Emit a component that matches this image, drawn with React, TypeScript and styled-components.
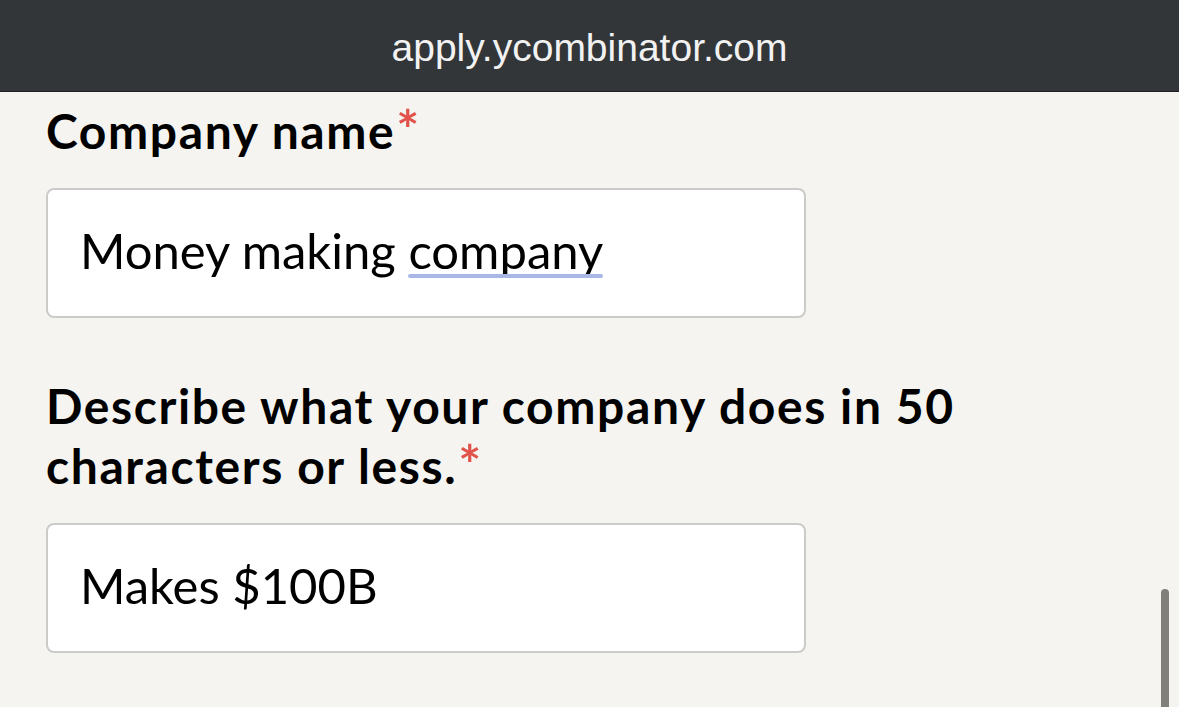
import styled, { createGlobalStyle } from "styled-components";

const GlobalStyle = createGlobalStyle`
    html, body {
        margin: 0;
        padding: 0;
        height: 707px;
        overflow: hidden;
        background: #f5f4f0;
    }
`;

const fields = [
    { label: "Company name", value: "Money making", flagged: "company" },
    { label: "Describe what your company does in 50 characters or less.", value: "Makes $100B" },
];

const App = () => {
    return (
        <Page>
            <GlobalStyle />
            <AddressBar>apply.ycombinator.com</AddressBar>
            <Form>
                {fields.map((field, index) => (
                    <Field key={index}>
                        <Label>
                            {field.label}
                            <Required>*</Required>
                        </Label>
                        <InputBox>
                            {field.value}
                            {field.flagged && (
                                <>
                                    {" "}
                                    <Flagged>{field.flagged}</Flagged>
                                </>
                            )}
                        </InputBox>
                    </Field>
                ))}
            </Form>
            <ScrollThumb />
        </Page>
    );
};

export default App;

const Page = styled.div`
    position: relative;
    height: 707px;
    background: #f5f4f0;
    font-family: Lato, "Noto Sans", sans-serif;
    overflow: hidden;
`;

const AddressBar = styled.div`
    height: 92px;
    background: #333639;
    border-bottom: 1px solid #1f2022;
    box-sizing: border-box;

    display: flex;
    align-items: center;
    justify-content: center;
    padding-top: 4px;

    color: #f2f2f2;
    font-family: "Liberation Sans", Arial, sans-serif;
    font-size: 39px;
`;

const Form = styled.div`
    padding: 9px 0 0 46px;
    width: 1000px;
    display: flex;
    flex-direction: column;
    gap: 58px;
`;

const Field = styled.div`
    display: flex;
    flex-direction: column;
    gap: 27px;
`;

const Label = styled.div`
    color: #000;
    font-weight: 700;
    font-size: 48px;
    line-height: 60px;
    letter-spacing: 1.6px;
`;

const Required = styled.span`
    color: #e0524a;
    font-size: 54px;
    line-height: 0;
    margin-left: 1px;
`;

const InputBox = styled.div`
    width: 760px;
    height: 130px;
    box-sizing: border-box;
    background: #fff;
    border: 2px solid #cbcbc9;
    border-radius: 8px;
    padding: 0 32px 6px;

    display: flex;
    align-items: center;
    white-space: pre;

    color: #000;
    font-weight: 400;
    font-size: 49px;
`;

const Flagged = styled.span`
    position: relative;

    &::after {
        content: "";
        position: absolute;
        left: 0;
        right: 0;
        bottom: 1px;
        height: 4px;
        border-radius: 2px;
        background: #a9b7e6;
    }
`;

const ScrollThumb = styled.div`
    position: absolute;
    right: 10px;
    top: 589px;
    width: 8px;
    height: 140px;
    border-radius: 4px;
    background: #807f7a;
`;
